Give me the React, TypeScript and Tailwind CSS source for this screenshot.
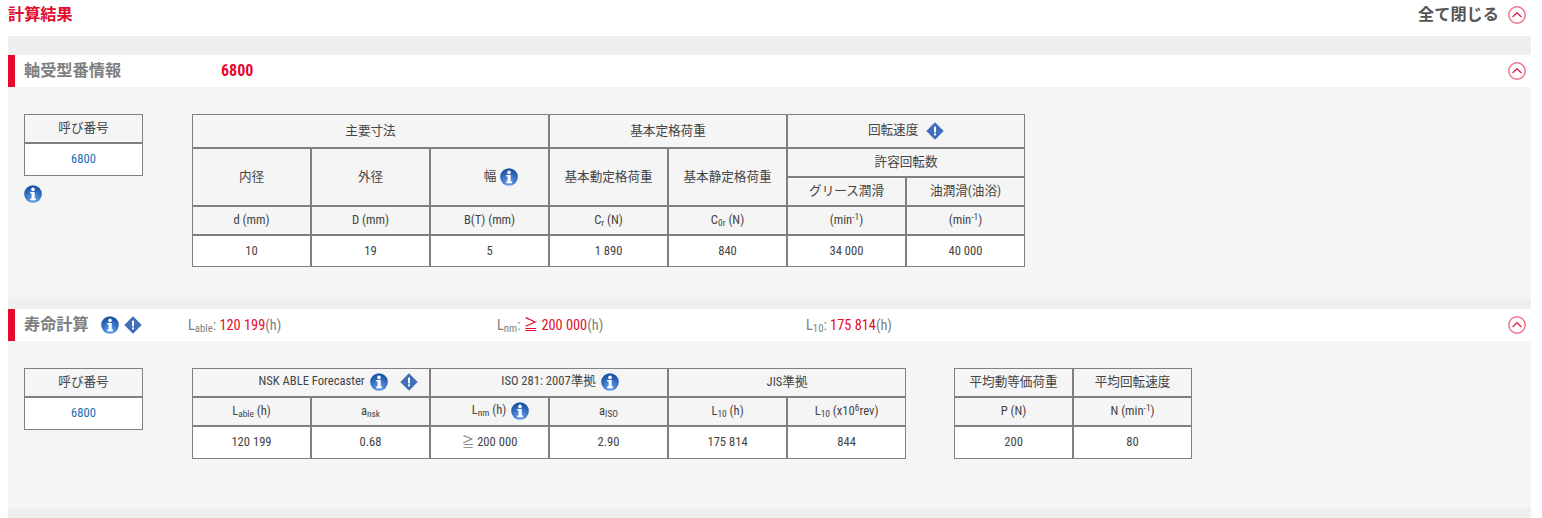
import React from "react";

const Info = ({ className = "" }: { className?: string }) => (
  <svg viewBox="0 0 18 18" className={`inline-block w-[18px] h-[18px] shrink-0 align-middle ${className}`}>
    <defs>
      <radialGradient id="ig" cx="50%" cy="85%" r="75%">
        <stop offset="0%" stopColor="#6aa5ee" />
        <stop offset="100%" stopColor="#1a52a8" />
      </radialGradient>
    </defs>
    <circle cx="9" cy="9" r="8.8" fill="url(#ig)" />
    <circle cx="9" cy="4.4" r="1.8" fill="#fff" />
    <path d="M6.2 7h4.5v6.6H12v1.6H6.2v-1.6h1.4V8.6H6.2z" fill="#fff" />
  </svg>
);

const Diamond = ({ className = "" }: { className?: string }) => (
  <svg viewBox="0 0 18 18" className={`inline-block w-[18px] h-[18px] shrink-0 align-middle ${className}`}>
    <path d="M9 .3 17.7 9 9 17.7.3 9z" fill="#3f6fb9" />
    <rect x="8" y="4.6" width="2" height="5.8" fill="#fff" />
    <rect x="8" y="11.4" width="2" height="2" fill="#fff" />
  </svg>
);

const Chevron = () => (
  <svg viewBox="0 0 18 18" className="w-[18px] h-[18px] shrink-0">
    <circle cx="9" cy="9" r="8.2" fill="none" stroke="#f0708a" strokeWidth="1.4" />
    <path d="M4.6 11 9 6.8l4.4 4.2" fill="none" stroke="#e8264a" strokeWidth="1.4" />
  </svg>
);

const Th = ({ children, className = "", ...p }: React.TdHTMLAttributes<HTMLTableCellElement>) => (
  <td {...p} className={`border border-[#808080] bg-[#f5f5f5] text-center align-middle p-0 pb-[1px] ${className}`}>
    {children}
  </td>
);
const Td = ({ children, className = "", ...p }: React.TdHTMLAttributes<HTMLTableCellElement>) => (
  <td {...p} className={`border border-[#808080] bg-white text-center align-middle p-0 pb-[1px] ${className}`}>
    {children}
  </td>
);

const Sub = ({ children }: { children: React.ReactNode }) => (
  <sub className="text-[0.75em] leading-none align-baseline relative top-[2px]">{children}</sub>
);
const Sup = ({ children }: { children: React.ReactNode }) => (
  <sup className="text-[0.75em] leading-none align-baseline relative top-[-4px]">{children}</sup>
);

const Cols = ({ n }: { n: number }) => (
  <colgroup>
    {Array.from({ length: n }).map((_, i) => (
      <col key={i} className="w-[119px]" />
    ))}
  </colgroup>
);

const NumberBox = () => (
  <table className="border-separate border-spacing-0 table-fixed w-[119px]">
    <tbody>
      <tr className="h-[29px]">
        <Th>呼び番号</Th>
      </tr>
      <tr className="h-[33px]">
        <Td className="text-[#1a6fb5]">6800</Td>
      </tr>
    </tbody>
  </table>
);

export default function App() {
  return (
    <div className="w-[1542px] h-[518px] overflow-hidden bg-white text-[12.6px] leading-[14px] text-[#444] [font-stretch:condensed] font-['Roboto','Noto_Sans_CJK_JP',sans-serif]">
      <div className="w-[1523px] ml-2">
        <div className="h-9 flex items-center justify-between pb-[7px]">
          <span className="text-[16.2px] font-bold text-[#e60a2d]">計算結果</span>
          <div className="flex items-center gap-[9px] pr-[5px]">
            <span className="text-[16.2px] font-bold text-[#555]">全て閉じる</span>
            <Chevron />
          </div>
        </div>

        <div className="h-[19px] bg-[#efefef]" />

        <div className="h-8 bg-white border-l-[7px] border-[#e60a2d] flex items-center pr-[5px]">
          <span className="w-[206px] pl-[9px] text-[16.2px] font-bold text-[#808080]">軸受型番情報</span>
          <span className="flex-1 text-[16px] font-bold text-[#e60a2d]">6800</span>
          <Chevron />
        </div>

        <div className="h-[212px] bg-[#f5f5f5] pl-4 pt-[27px] flex items-start">
          <div className="w-[168px] shrink-0">
            <NumberBox />
            <Info className="mt-[9px] block" />
          </div>
          <table className="border-separate border-spacing-0 table-fixed w-[833px]">
            <Cols n={7} />
            <tbody>
              <tr className="h-[34px]">
                <Th colSpan={3}>主要寸法</Th>
                <Th colSpan={2}>基本定格荷重</Th>
                <Th colSpan={2}>
                  回転速度 <Diamond className="ml-[5px]" />
                </Th>
              </tr>
              <tr className="h-[29px]">
                <Th rowSpan={2}>内径</Th>
                <Th rowSpan={2}>外径</Th>
                <Th rowSpan={2} className="pl-[23px]">
                  幅 <Info className="ml-[1px]" />
                </Th>
                <Th rowSpan={2}>基本動定格荷重</Th>
                <Th rowSpan={2}>基本静定格荷重</Th>
                <Th colSpan={2}>許容回転数</Th>
              </tr>
              <tr className="h-[29px]">
                <Th>グリース潤滑</Th>
                <Th>油潤滑(油浴)</Th>
              </tr>
              <tr className="h-[29px]">
                <Th>d (mm)</Th>
                <Th>D (mm)</Th>
                <Th>B(T) (mm)</Th>
                <Th>
                  C<Sub>r</Sub> (N)
                </Th>
                <Th>
                  C<Sub>0r</Sub> (N)
                </Th>
                <Th>
                  (min<Sup>-1</Sup>)
                </Th>
                <Th>
                  (min<Sup>-1</Sup>)
                </Th>
              </tr>
              <tr className="h-[32px]">
                <Td>10</Td>
                <Td>19</Td>
                <Td>5</Td>
                <Td>1 890</Td>
                <Td>840</Td>
                <Td>34 000</Td>
                <Td>40 000</Td>
              </tr>
            </tbody>
          </table>
        </div>

        <div className="h-[10px] bg-[#efefef]" />

        <div className="h-8 bg-white border-l-[7px] border-[#e60a2d] flex items-center pr-[5px] text-[#808080]">
          <div className="w-[173px] pl-[9px] flex items-center shrink-0">
            <span className="text-[16.2px] font-bold mr-[12px] -mt-[1px]">寿命計算</span>
            <Info />
            <Diamond className="ml-[5px]" />
          </div>
          <span className="w-[309px] text-[14.35px] pt-[2px]">
            L<Sub>able</Sub>: <span className="text-[#e60a2d]">120 199</span>(h)
          </span>
          <span className="w-[309px] text-[14.35px] pt-[2px]">
            L<Sub>nm</Sub>: <span className="text-[#e60a2d]">≧ 200 000</span>(h)
          </span>
          <span className="flex-1 text-[14.35px] pt-[2px]">
            L<Sub>10</Sub>: <span className="text-[#e60a2d]">175 814</span>(h)
          </span>
          <Chevron />
        </div>

        <div className="h-[167px] bg-[#f5f5f5] pl-4 pt-[27px] flex items-start">
          <div className="w-[168px] shrink-0">
            <NumberBox />
          </div>
          <table className="border-separate border-spacing-0 table-fixed w-[714px]">
            <Cols n={6} />
            <tbody>
              <tr className="h-[29px]">
                <Th colSpan={2} className="pl-[54px]">
                  NSK ABLE Forecaster <Info className="ml-[2px]" />
                  <Diamond className="ml-[12px]" />
                </Th>
                <Th colSpan={2} className="pl-[22px]">
                  ISO 281: 2007準拠 <Info className="ml-[2px]" />
                </Th>
                <Th colSpan={2}>JIS準拠</Th>
              </tr>
              <tr className="h-[29px]">
                <Th>
                  L<Sub>able</Sub> (h)
                </Th>
                <Th>
                  a<Sub>nsk</Sub>
                </Th>
                <Th className="pl-[22px]">
                  L<Sub>nm</Sub> (h) <Info className="ml-[2px]" />
                </Th>
                <Th>
                  a<Sub>ISO</Sub>
                </Th>
                <Th>
                  L<Sub>10</Sub> (h)
                </Th>
                <Th>
                  L<Sub>10</Sub> (x10<Sup>6</Sup>rev)
                </Th>
              </tr>
              <tr className="h-[33px]">
                <Td>120 199</Td>
                <Td>0.68</Td>
                <Td>
                  <span className="text-[#808080]">≧</span> 200 000
                </Td>
                <Td>2.90</Td>
                <Td>175 814</Td>
                <Td>844</Td>
              </tr>
            </tbody>
          </table>
          <table className="border-separate border-spacing-0 table-fixed w-[238px] ml-[48px]">
            <Cols n={2} />
            <tbody>
              <tr className="h-[29px]">
                <Th>平均動等価荷重</Th>
                <Th>平均回転速度</Th>
              </tr>
              <tr className="h-[29px]">
                <Th>P (N)</Th>
                <Th>
                  N (min<Sup>-1</Sup>)
                </Th>
              </tr>
              <tr className="h-[33px]">
                <Td>200</Td>
                <Td>80</Td>
              </tr>
            </tbody>
          </table>
        </div>

        <div className="h-[10px] bg-[#efefef]" />
      </div>
    </div>
  );
}
